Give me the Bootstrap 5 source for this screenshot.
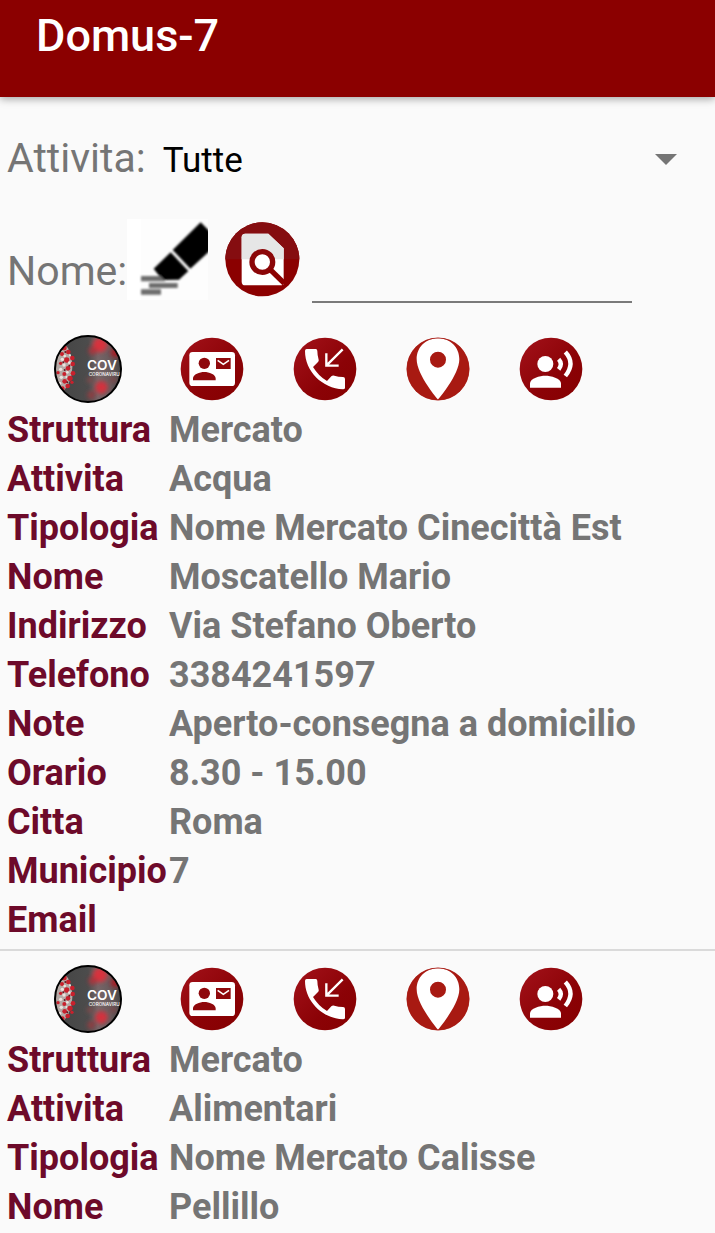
<!DOCTYPE html>
<html lang="it">
<head>
<meta charset="utf-8">
<meta name="viewport" content="width=device-width, initial-scale=1">
<title>Domus-7</title>
<link href="https://cdn.jsdelivr.net/npm/bootstrap@5.3.0/dist/css/bootstrap.min.css" rel="stylesheet">
<style>
  body { font-family: Roboto, sans-serif; background: #fafafa; color: #757575; }
  .app-bar { background: #8b0000; padding: 10px 36px 35px; box-shadow: 0 2px 8px rgba(0, 0, 0, .35); }
  .app-title { font-size: 45px; line-height: 52px; font-weight: 500; color: #fff; }
  .icon-defs { width: 0; height: 0; }
  .filters { padding: 37px 7px 18px; }
  .filter-label { font-size: 41px; line-height: 48px; }
  .activity-select {
    appearance: none; font-size: 35px; line-height: 48px; color: #000; padding: 0 48px 0 17px;
    background: url("data:image/svg+xml,%3Csvg xmlns='http://www.w3.org/2000/svg' viewBox='0 0 22 11'%3E%3Cpath d='M0 0h22L11 11z' fill='%23757575'/%3E%3C/svg%3E") no-repeat right 31px top 17px / 22px 11px;
  }
  .name-row { margin-top: 34px; }
  .name-row .filter-label { margin-bottom: 8px; }
  .tool-btn { margin-bottom: 3px; }
  .tool-btn svg { width: 81px; height: 81px; }
  .search-btn { margin: 0 12px 6px 17px; }
  .search-btn svg { width: 75px; height: 75px; }
  .name-input { width: 320px; height: 72px; font-size: 36px; border-bottom: 2px solid #7a7a7a; }
  .entry { padding: 12px 7px 4px; border-bottom: 2px solid #dadada; }
  .entry:last-child { border-bottom: 0; padding-bottom: 0; }
  .actions { height: 72px; margin-bottom: 1px; padding-left: 47px; gap: 49px; }
  .actions svg { width: 64px; height: 64px; }
  .actions .covid-btn { margin-right: 9px; }
  .actions .covid-btn svg { width: 68px; height: 68px; }
  .covid-btn text { font-family: Inter, sans-serif; fill: #fff; }
  .covid-big { font-size: 41px; font-weight: 600; }
  .covid-small { font-size: 14px; font-weight: 500; }
  .details { display: grid; grid-template-columns: 162px 1fr; font-size: 36px; line-height: 49px; }
  .details dt, .details dd { font-weight: 700; margin: 0; }
  .details dt { color: #6d0a2a; }
</style>
</head>
<body>
<svg class="icon-defs position-absolute" aria-hidden="true">
  <defs>
    <linearGradient id="redFill" x1="0" y1="0" x2="1" y2="1">
      <stop offset="0" stop-color="#a3121a"/><stop offset=".6" stop-color="#8b0206"/><stop offset="1" stop-color="#860000"/>
    </linearGradient>
    <linearGradient id="covidFill">
      <stop offset="0" stop-color="#444"/><stop offset=".5" stop-color="#4c4c4c"/><stop offset=".65" stop-color="#766668"/><stop offset=".85" stop-color="#66595b"/><stop offset="1" stop-color="#444"/>
    </linearGradient>
    <filter id="haze" x="-50%" y="-50%" width="200%" height="200%"><feGaussianBlur stdDeviation="7"/></filter>
    <clipPath id="covidClip"><circle cx="114" cy="117" r="99"/></clipPath>
  </defs>
  <symbol id="covid" viewBox="12 15 204 204">
    <circle cx="114" cy="117" r="100" fill="url(#covidFill)"/>
    <g clip-path="url(#covidClip)">
      <g filter="url(#haze)">
        <circle cx="150" cy="45" r="22" fill="#d8323c"/><circle cx="128" cy="62" r="12" fill="#a8343c"/>
        <circle cx="154" cy="172" r="19" fill="#d2303c"/><circle cx="124" cy="195" r="12" fill="#8c3c42"/>
        <circle cx="196" cy="68" r="14" fill="#a81c26"/><circle cx="120" cy="150" r="9" fill="#80484c"/>
        <circle cx="190" cy="150" r="10" fill="#7c484c"/>
      </g>
      <path d="M10 40h30l14 14 8 22 6 28-4 34-10 28-16 20H10z" fill="#b5aaa6"/>
      <g fill="#c9202c">
        <circle cx="42" cy="53" r="8"/><circle cx="55" cy="66" r="7"/><circle cx="36" cy="72" r="6"/><circle cx="67" cy="84" r="7"/>
        <circle cx="50" cy="90" r="8"/><circle cx="68" cy="102" r="7"/><circle cx="32" cy="100" r="5"/><circle cx="54" cy="115" r="7"/>
        <circle cx="69" cy="130" r="7"/><circle cx="43" cy="132" r="6"/><circle cx="60" cy="145" r="8"/><circle cx="66" cy="157" r="5"/>
        <circle cx="44" cy="154" r="7"/><circle cx="53" cy="168" r="7"/><circle cx="37" cy="176" r="7"/><circle cx="24" cy="128" r="5"/>
      </g>
      <g fill="#eee3df">
        <circle cx="44" cy="78" r="4"/><circle cx="37" cy="88" r="5"/><circle cx="58" cy="98" r="4"/><circle cx="42" cy="105" r="5"/>
        <circle cx="32" cy="118" r="5"/><circle cx="52" cy="127" r="4"/><circle cx="34" cy="142" r="5"/><circle cx="49" cy="141" r="3"/>
        <circle cx="30" cy="160" r="4"/><circle cx="30" cy="62" r="4"/><circle cx="60" cy="76" r="3"/>
      </g>
      <g fill="#651820">
        <circle cx="46" cy="66" r="3"/><circle cx="58" cy="107" r="3"/><circle cx="44" cy="120" r="3"/><circle cx="52" cy="157" r="3"/><circle cx="40" cy="97" r="3"/>
      </g>
    </g>
    <circle cx="114" cy="117" r="99" fill="none" stroke="#000" stroke-width="6"/>
  </symbol>
  <symbol id="contact" viewBox="420 36 192 192">
    <circle cx="516" cy="132" r="94" fill="url(#redFill)"/>
    <rect x="448" y="81" width="137" height="102" rx="10" fill="#fff"/>
    <circle cx="493" cy="115" r="17" fill="#8f080c"/>
    <path d="M459 166v-6c0-12 20-19 34-19s34 7 34 19v6zM528 99h44v33h-44z" fill="#8f080c"/>
    <path d="M533 106l17 12 17-12" fill="none" stroke="#fff" stroke-width="5"/>
  </symbol>
  <symbol id="call" viewBox="39 36 192 192">
    <circle cx="135" cy="132" r="94" fill="url(#redFill)"/>
    <path d="M80 72h27q5 0 5 6 0 13 4 26 1 4-2 7l-15 15q18 29 42 42l13-14q4-4 9-2 12 4 26 4 6 0 6 6v26q0 5-6 5C127 190 75 139 75 78q0-6 5-6z" fill="#fff"/>
    <path d="M188 73l-49 49M139 85v37h37" fill="none" stroke="#fff" stroke-width="7"/>
  </symbol>
  <symbol id="place" viewBox="378 36 192 192">
    <circle cx="474" cy="132" r="94" fill="#a81a12"/>
    <path d="M474 40c-37 0-64 27-64 63 0 47 64 121 64 121s64-74 64-121c0-36-27-63-64-63zm0 40a24 24 0 1 1 0 48 24 24 0 0 1 0-48z" fill="#fff" fill-rule="evenodd"/>
    <circle cx="474" cy="132" r="93" fill="none" stroke="#a81a12" stroke-width="2"/>
  </symbol>
  <symbol id="voice" viewBox="717 36 192 192">
    <circle cx="813" cy="132" r="94" fill="url(#redFill)"/>
    <circle cx="796" cy="117" r="24" fill="#fff"/>
    <path d="M750 188v-13c0-15 30-23 46-23s47 8 47 23v13z" fill="#fff"/>
    <path d="M836 103q13 14 0 30M856 81q31 34 0 72" fill="none" stroke="#fff" stroke-width="13"/>
  </symbol>
</svg>

<header class="app-bar">
  <h1 class="app-title m-0">Domus-7</h1>
</header>

<main>
  <form class="filters">
    <div class="d-flex align-items-baseline">
      <label class="filter-label" for="attivita">Attivita:</label>
      <select id="attivita" class="activity-select flex-grow-1 border-0 rounded-0">
        <option>Tutte</option><option>Acqua</option><option>Alimentari</option>
      </select>
    </div>
    <div class="name-row d-flex align-items-end">
      <label class="filter-label" for="nome">Nome:</label>
      <button type="button" class="btn tool-btn p-0 border-0 rounded-0 lh-1" aria-label="Cancella">
        <svg class="d-block" viewBox="21 27 243 243">
          <defs><filter id="soft"><feGaussianBlur stdDeviation="3"/></filter></defs>
          <path d="M21 27h243v243H21z" fill="#fdfdfd"/><path d="M21 27h42v243H21z" fill="#fff"/>
          <g filter="url(#soft)">
            <path d="M242 37l40 40-2 36-69 63-53-56zM152 127l53 56-28 26-50 1-26-34z"/>
            <path d="M63 198h58l16 16H63zM87 219h86v15H87zM63 238h60v16H63z" fill="#6d6d6d"/>
          </g>
        </svg>
      </button>
      <button type="submit" class="btn search-btn p-0 border-0 rounded-circle lh-1" aria-label="Cerca">
        <svg class="d-block" viewBox="315 36 225 225">
          <circle cx="427" cy="148" r="111" fill="#8b0000"/>
          <path d="M316 148a111 111 0 0 1 222 0z" fill="#850d10"/>
          <path d="M376 71h69l46 44v105q0 6-6 6H376q-11 0-11-11V82q0-11 11-11z" fill="#fff"/>
          <path d="M376 71h69l46 44v33H365V82q0-11 11-11z" fill="#e6e6e6"/>
          <circle cx="427" cy="156" r="31" fill="#fff" stroke="#8b0608" stroke-width="16"/>
          <path d="M450 178l43 42" stroke="#8b0000" stroke-width="16"/>
        </svg>
      </button>
      <input id="nome" type="text" class="name-input border-top-0 border-start-0 border-end-0 bg-transparent p-0">
    </div>
  </form>

  <section class="entry">
    <div class="actions d-flex align-items-center">
      <button type="button" class="btn covid-btn p-0 border-0" aria-label="Informazioni COVID">
        <svg class="d-block" viewBox="0 0 204 204"><use href="#covid"/><text class="covid-big" x="99" y="105">COV</text><text class="covid-small" x="104" y="124">CORONAVIRU</text></svg>
      </button>
      <button type="button" class="btn p-0 border-0" aria-label="Contatto"><svg class="d-block"><use href="#contact"/></svg></button>
      <button type="button" class="btn p-0 border-0" aria-label="Chiama"><svg class="d-block"><use href="#call"/></svg></button>
      <button type="button" class="btn p-0 border-0" aria-label="Mappa"><svg class="d-block"><use href="#place"/></svg></button>
      <button type="button" class="btn p-0 border-0" aria-label="Leggi"><svg class="d-block"><use href="#voice"/></svg></button>
    </div>
    <dl class="details m-0">
      <dt>Struttura</dt><dd>Mercato</dd>
      <dt>Attivita</dt><dd>Acqua</dd>
      <dt>Tipologia</dt><dd>Nome Mercato Cinecittà Est</dd>
      <dt>Nome</dt><dd>Moscatello Mario</dd>
      <dt>Indirizzo</dt><dd>Via Stefano Oberto</dd>
      <dt>Telefono</dt><dd>3384241597</dd>
      <dt>Note</dt><dd>Aperto-consegna a domicilio</dd>
      <dt>Orario</dt><dd>8.30 - 15.00</dd>
      <dt>Citta</dt><dd>Roma</dd>
      <dt>Municipio</dt><dd>7</dd>
      <dt>Email</dt><dd></dd>
    </dl>
  </section>

  <section class="entry">
    <div class="actions d-flex align-items-center">
      <button type="button" class="btn covid-btn p-0 border-0" aria-label="Informazioni COVID">
        <svg class="d-block" viewBox="0 0 204 204"><use href="#covid"/><text class="covid-big" x="99" y="105">COV</text><text class="covid-small" x="104" y="124">CORONAVIRU</text></svg>
      </button>
      <button type="button" class="btn p-0 border-0" aria-label="Contatto"><svg class="d-block"><use href="#contact"/></svg></button>
      <button type="button" class="btn p-0 border-0" aria-label="Chiama"><svg class="d-block"><use href="#call"/></svg></button>
      <button type="button" class="btn p-0 border-0" aria-label="Mappa"><svg class="d-block"><use href="#place"/></svg></button>
      <button type="button" class="btn p-0 border-0" aria-label="Leggi"><svg class="d-block"><use href="#voice"/></svg></button>
    </div>
    <dl class="details m-0">
      <dt>Struttura</dt><dd>Mercato</dd>
      <dt>Attivita</dt><dd>Alimentari</dd>
      <dt>Tipologia</dt><dd>Nome Mercato Calisse</dd>
      <dt>Nome</dt><dd>Pellillo</dd>
    </dl>
  </section>
</main>
<script src="https://cdn.jsdelivr.net/npm/bootstrap@5.3.0/dist/js/bootstrap.bundle.min.js"></script>
</body>
</html>
